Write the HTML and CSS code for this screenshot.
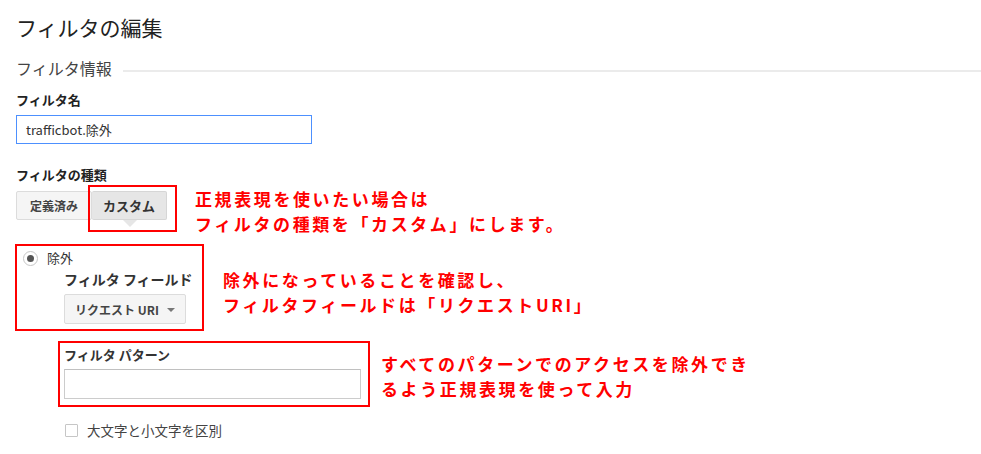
FILE: index.html
```html
<!DOCTYPE html>
<html lang="ja">
<head>
<meta charset="utf-8">
<title>フィルタの編集</title>
<link rel="stylesheet" href="styles.css">
</head>
<body>
<div class="page">
  <h1 class="title">フィルタの編集</h1>
  <div class="section-head">
    <span class="section-title">フィルタ情報</span>
    <span class="section-rule"></span>
  </div>

  <div class="label label-name">フィルタ名</div>
  <div class="text-input name-input">trafficbot.除外</div>

  <div class="label label-type">フィルタの種類</div>
  <div class="row row-type">
    <div class="seg">
      <span class="seg-btn">定義済み</span>
      <span class="seg-btn seg-active">カスタム<span class="seg-pointer"></span><span class="mark mark-custom"></span></span>
    </div>
    <p class="note note-type">正規表現を使いたい場合は<br>フィルタの種類を「カスタム」にします。</p>
  </div>

  <div class="row row-field">
    <div class="redbox field-box">
      <div class="radio-row">
        <span class="radio"><span class="radio-dot"></span></span>
        <span class="radio-label">除外</span>
      </div>
      <div class="field-block">
        <div class="field-label">フィルタ フィールド</div>
        <div class="dropdown"><span class="dropdown-text">リクエスト URI</span><span class="dropdown-arrow"></span></div>
      </div>
    </div>
    <p class="note note-field">除外になっていることを確認し、<br>フィルタフィールドは「リクエストURI」</p>
  </div>

  <div class="row row-pattern">
    <div class="redbox pattern-box">
      <div class="label pattern-label">フィルタ パターン</div>
      <div class="text-input pattern-input"></div>
    </div>
    <p class="note note-pattern">すべてのパターンでのアクセスを除外でき<br>るよう正規表現を使って入力</p>
  </div>

  <div class="check-row">
    <span class="checkbox"></span>
    <span class="check-label">大文字と小文字を区別</span>
  </div>
</div>
</body>
</html>
```

FILE: styles.css
```css
html, body {
  margin: 0;
  padding: 0;
  background: #ffffff;
}

body {
  font-family: "Noto Sans CJK JP", "Noto Sans", sans-serif;
  color: #333;
}

.page {
  padding: 13px 0 0 16px;
}

.title {
  margin: 0;
  font-size: 21px;
  line-height: 28px;
  font-weight: 400;
  color: #222;
}

.section-head {
  display: flex;
  align-items: center;
  margin-top: 16px;
  height: 22px;
}

.section-title {
  font-size: 16px;
  line-height: 22px;
  color: #444;
  white-space: nowrap;
}

.section-rule {
  flex: 1;
  height: 2px;
  background: #ebebeb;
  margin-left: 11px;
  margin-top: 6px;
}

.label {
  font-size: 13px;
  line-height: 18px;
  font-weight: 700;
  color: #222;
}

.label-name {
  margin-top: 12px;
}

.text-input {
  box-sizing: border-box;
  border: 1px solid #ccc;
  border-top-color: #c0c0c0;
  background: #fff;
  font-size: 13px;
  color: #333;
}

.name-input {
  margin-top: 6px;
  width: 296px;
  height: 29px;
  line-height: 27px;
  padding-left: 9px;
  border-color: #4d90fe;
}

.label-type {
  margin-top: 22px;
}

.row {
  display: flex;
  align-items: flex-start;
}

.row-type {
  margin-top: 7px;
}

.seg {
  display: flex;
}

.seg-btn {
  position: relative;
  box-sizing: border-box;
  height: 29px;
  line-height: 27px;
  font-size: 12px;
  font-weight: 700;
  color: #444;
  background: #f5f5f5;
  border: 1px solid #dcdcdc;
  border-radius: 2px;
  text-align: center;
}

.seg-btn:first-child {
  width: 76px;
}

.seg-active {
  width: 75px;
  font-size: 13px;
  color: #333;
  background: #e6e6e6;
  border-color: #d6d6d6;
  border-left: none;
}

.seg-pointer {
  position: absolute;
  left: 31px;
  top: 28px;
  width: 0;
  height: 0;
  border-left: 7px solid transparent;
  border-right: 7px solid transparent;
  border-top: 7px solid #e6e6e6;
}

.mark {
  position: absolute;
  border: 2px solid #ff0000;
  box-sizing: border-box;
}

.mark-custom {
  left: -4px;
  top: -7px;
  width: 89px;
  height: 47px;
}

.note {
  margin: 0;
  font-size: 17px;
  line-height: 25px;
  font-weight: 700;
  letter-spacing: 2.6px;
  color: #ff0000;
  white-space: nowrap;
}

.note-type {
  margin-left: 28px;
  margin-top: -5px;
  margin-bottom: -16px;
}

.redbox {
  box-sizing: border-box;
  border: 2px solid #ff0000;
}

.row-field {
  margin-top: 24px;
}

.field-box {
  width: 189px;
  margin-left: -1px;
  padding: 2px 0 5px 6px;
}

.radio-row {
  display: flex;
  align-items: center;
  height: 20px;
}

.radio {
  box-sizing: border-box;
  width: 15px;
  height: 15px;
  border: 1px solid #c6c6c6;
  border-radius: 50%;
  background: #fff;
  display: flex;
  align-items: center;
  justify-content: center;
}

.radio-dot {
  width: 7px;
  height: 7px;
  border-radius: 50%;
  background: #555;
}

.radio-label {
  margin-left: 9px;
  font-size: 13px;
  line-height: 18px;
  color: #333;
}

.field-block {
  margin-left: 41px;
  margin-top: 1px;
}

.field-label {
  font-size: 14px;
  line-height: 20px;
  font-weight: 700;
  color: #333;
  white-space: nowrap;
}

.dropdown {
  box-sizing: border-box;
  margin-top: 5px;
  width: 122px;
  height: 30px;
  display: flex;
  align-items: center;
  justify-content: space-between;
  padding: 0 10px 0 10px;
  background: #f5f5f5;
  border: 1px solid #dcdcdc;
  border-radius: 2px;
}

.dropdown-text {
  font-size: 12px;
  font-weight: 700;
  color: #444;
  white-space: nowrap;
}

.dropdown-arrow {
  width: 0;
  height: 0;
  border-left: 4px solid transparent;
  border-right: 4px solid transparent;
  border-top: 4px solid #777;
  margin-top: 2px;
}

.note-field {
  margin-left: 19px;
  margin-top: 23px;
}

.row-pattern {
  margin-top: 10px;
}

.pattern-box {
  width: 312px;
  margin-left: 42px;
  padding: 3px 0 6px 4px;
}

.pattern-label {
  font-size: 13px;
  color: #333;
}

.pattern-input {
  margin-top: 5px;
  width: 297px;
  height: 30px;
}

.note-pattern {
  margin-left: 11px;
  margin-top: 10px;
}

.check-row {
  display: flex;
  align-items: center;
  margin-top: 14px;
  margin-left: 49px;
  height: 18px;
}

.checkbox {
  box-sizing: border-box;
  width: 13px;
  height: 13px;
  border: 1px solid #c6c6c6;
  border-radius: 1px;
  background: #fff;
}

.check-label {
  margin-left: 9px;
  font-size: 13.5px;
  line-height: 18px;
  color: #444;
}
```
